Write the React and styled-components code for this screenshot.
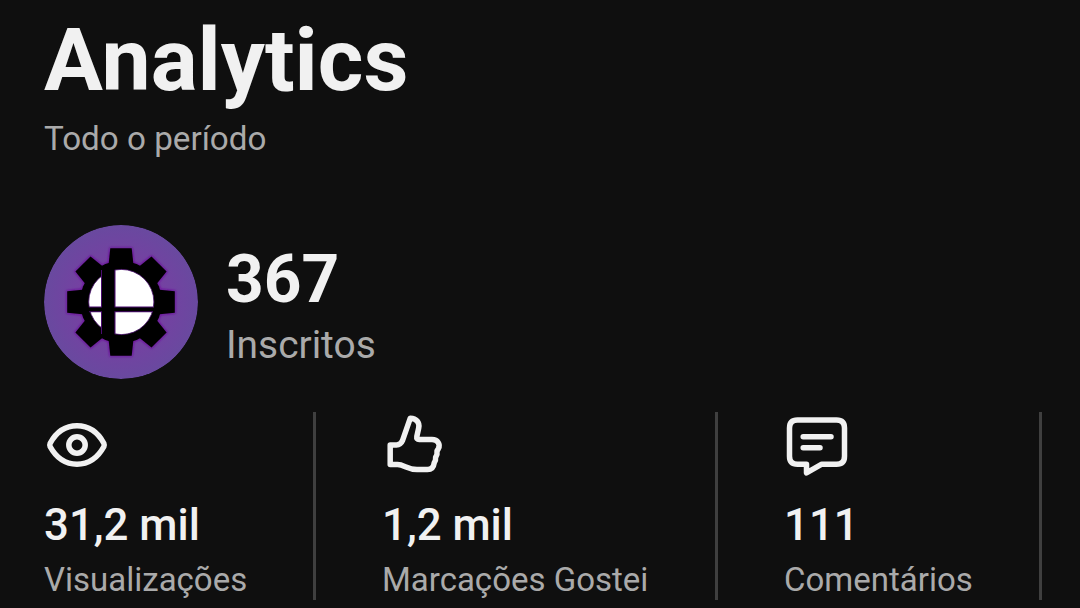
import React from "react";
import styled, { createGlobalStyle } from "styled-components";

const GlobalStyle = createGlobalStyle`
  * {
    box-sizing: border-box;
  }

  body {
    margin: 0;
    background: #0f0f0f;
    overflow: hidden;
  }
`;

const Page = styled.main`
  height: 608px;
  padding: 10px 0 0 44px;
  overflow: hidden;
  background: #0f0f0f;
  color: #f1f1f1;
  font-family: Roboto, "Liberation Sans", sans-serif;
  white-space: nowrap;
`;

const Title = styled.h1`
  margin: 0;
  font-size: 87.7px;
  font-weight: 700;
  line-height: 100px;
`;

const Period = styled.p`
  margin: 9px 0 0;
  color: #aaaaaa;
  font-size: 33.2px;
  line-height: 40px;
`;

const Profile = styled.section`
  display: flex;
  align-items: flex-start;
  gap: 28px;
  margin-top: 66px;
`;

const Avatar = styled.svg`
  display: block;
  width: 154px;
  height: 154px;
  border-radius: 50%;
`;

const ProfileText = styled.div`
  padding-top: 19px;
`;

const Subscribers = styled.div`
  font-size: 65.8px;
  font-weight: 700;
  line-height: 72px;
`;

const SubscribersLabel = styled.div`
  margin-top: 7px;
  color: #aaaaaa;
  font-size: 38.9px;
  line-height: 44px;
`;

const Stats = styled.section`
  display: grid;
  grid-template-columns: 272px 336px 258px;
  column-gap: 66px;
  margin-top: 33px;
`;

const Stat = styled.div`
  height: 188px;
  border-right: 3px solid #3f3f3f;
`;

const Icon = styled.svg`
  display: block;
  width: 66px;
  height: 66px;
  fill: none;
  stroke: #f1f1f1;
  stroke-width: 5.5;
  stroke-linecap: round;
  stroke-linejoin: round;
`;

const Value = styled.div`
  margin-top: 21px;
  font-size: 43.8px;
  font-weight: 500;
  line-height: 52px;
`;

const Label = styled.div`
  margin-top: 9px;
  color: #aaaaaa;
  font-size: 33px;
  line-height: 40px;
`;

const TEETH = [0, 45, 90, 135, 180, 225, 270, 315];

function Gear() {
  return (
    <>
      <circle r="41" />
      {TEETH.map((angle) => (
        <path
          key={angle}
          d="M-12.6 -36 L-10.7 -53.8 H10.7 L12.6 -36 Z"
          transform={`rotate(${angle})`}
        />
      ))}
    </>
  );
}

function ChannelAvatar() {
  return (
    <Avatar viewBox="-77 -77 154 154">
      <defs>
        <radialGradient id="backdrop">
          <stop offset="0.5" stopColor="#7640a2" />
          <stop offset="1" stopColor="#69499f" />
        </radialGradient>
        <filter id="glow" x="-20%" y="-20%" width="140%" height="140%">
          <feGaussianBlur stdDeviation="0.8" />
        </filter>
      </defs>
      <circle r="77" fill="url(#backdrop)" />
      <g fill="#6c109c" stroke="#6c109c" strokeWidth="1.6" filter="url(#glow)">
        <Gear />
      </g>
      <g fill="#000000">
        <Gear />
      </g>
      <circle r="32.6" cx="0.3" fill="#ffffff" stroke="#4b1070" strokeWidth="0.8" />
      <path d="M-20 -32 H-5.5 V32 H-20 Z M-32 4.5 H32 V10.2 H-32 Z" fill="#4b0c70" />
      <path d="M-19 -34 H-6.6 V34 H-19 Z M-34 5.6 H34 V9.2 H-34 Z" fill="#000000" />
    </Avatar>
  );
}

function EyeIcon() {
  return (
    <Icon viewBox="0 0 66 66">
      <path d="M33 13.8 C46 13.8 54.5 21.5 59.8 31.2 Q60.6 33 59.8 34.8 C54.5 44.5 46 52.2 33 52.2 C20 52.2 11.5 44.5 6.2 34.8 Q5.4 33 6.2 31.2 C11.5 21.5 20 13.8 33 13.8 Z" />
      <circle cx="33" cy="33" r="8.2" />
    </Icon>
  );
}

function LikeIcon() {
  return (
    <Icon viewBox="0 0 66 66">
      <path d="M8.2 32.9 H14.5 C17.8 32.9 19.3 31.5 20.4 28.8 L28.3 6.2 C34.3 6.5 38 10.5 36.7 16 L34.8 24.6 Q34.3 27.6 37.2 27.6 H50 C55.8 27.6 58.6 32.3 56.4 36.6 L55 39 Q55.6 42.4 53.6 45.4 Q54 48.4 52.2 50.8 C51.6 55.5 49.5 57.5 45.5 57.5 H35 C25.5 57.5 22 52.6 15.5 52.6 H8.2 Z" />
    </Icon>
  );
}

function CommentIcon() {
  return (
    <Icon viewBox="0 0 66 66">
      <path d="M13.5 8.1 H52.5 Q60.5 8.1 60.5 16.1 V44.2 Q60.5 52.2 52.5 52.2 H37.8 L22.5 60.8 V52.2 H13.5 Q5.5 52.2 5.5 44.2 V16.1 Q5.5 8.1 13.5 8.1 Z" />
      <path d="M19.2 24.7 H47 M19.2 35.7 H36" />
    </Icon>
  );
}

export default function App() {
  return (
    <>
      <GlobalStyle />
      <Page>
        <Title>Analytics</Title>
        <Period>Todo o período</Period>
        <Profile>
          <ChannelAvatar />
          <ProfileText>
            <Subscribers>367</Subscribers>
            <SubscribersLabel>Inscritos</SubscribersLabel>
          </ProfileText>
        </Profile>
        <Stats>
          <Stat>
            <EyeIcon />
            <Value>31,2 mil</Value>
            <Label>Visualizações</Label>
          </Stat>
          <Stat>
            <LikeIcon />
            <Value>1,2 mil</Value>
            <Label>Marcações Gostei</Label>
          </Stat>
          <Stat>
            <CommentIcon />
            <Value>111</Value>
            <Label>Comentários</Label>
          </Stat>
        </Stats>
      </Page>
    </>
  );
}
